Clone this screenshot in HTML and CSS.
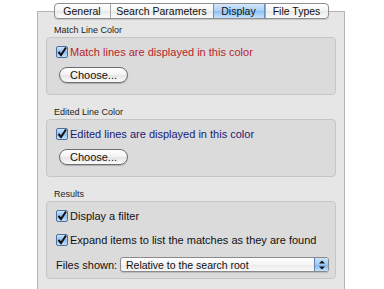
FILE: index.html
```html
<!DOCTYPE html>
<html lang="en">
<head>
    <meta charset="UTF-8">
    <title>Display Preferences</title>
    <link rel="stylesheet" href="styles.css">
</head>
<body>
    <div class="tabview">
        <div class="tabs">
            <div class="tab first">General</div>
            <div class="tab">Search Parameters</div>
            <div class="tab selected">Display</div>
            <div class="tab last">File Types</div>
        </div>

        <div class="section-title">Match Line Color</div>
        <div class="group">
            <label class="check red">
                <svg class="box" width="12" height="12" viewBox="0 0 12 12"><rect x="0.5" y="0.5" width="11" height="11" rx="1.5" fill="url(#aqua)" stroke="#4d6f9c"/><path d="M2.5 6 L5 9 L10 1.5" fill="none" stroke="#111" stroke-width="2"/></svg>
                Match lines are displayed in this color
            </label>
            <div class="button">Choose...</div>
        </div>

        <div class="section-title">Edited Line Color</div>
        <div class="group">
            <label class="check blue">
                <svg class="box" width="12" height="12" viewBox="0 0 12 12"><rect x="0.5" y="0.5" width="11" height="11" rx="1.5" fill="url(#aqua)" stroke="#4d6f9c"/><path d="M2.5 6 L5 9 L10 1.5" fill="none" stroke="#111" stroke-width="2"/></svg>
                Edited lines are displayed in this color
            </label>
            <div class="button">Choose...</div>
        </div>

        <div class="section-title">Results</div>
        <div class="group results">
            <label class="check">
                <svg class="box" width="12" height="12" viewBox="0 0 12 12"><rect x="0.5" y="0.5" width="11" height="11" rx="1.5" fill="url(#aqua)" stroke="#4d6f9c"/><path d="M2.5 6 L5 9 L10 1.5" fill="none" stroke="#111" stroke-width="2"/></svg>
                Display a filter
            </label>
            <label class="check">
                <svg class="box" width="12" height="12" viewBox="0 0 12 12"><rect x="0.5" y="0.5" width="11" height="11" rx="1.5" fill="url(#aqua)" stroke="#4d6f9c"/><path d="M2.5 6 L5 9 L10 1.5" fill="none" stroke="#111" stroke-width="2"/></svg>
                Expand items to list the matches as they are found
            </label>
            <div class="popup-row">
                <span class="popup-label">Files shown:</span>
                <div class="popup">
                    <span class="value">Relative to the search root</span>
                    <span class="stepper">
                        <svg width="8" height="10" viewBox="0 0 8 10"><path d="M4 0.5 L7 3.5 L1 3.5 Z M4 9.5 L7 6.5 L1 6.5 Z" fill="#111"/></svg>
                    </span>
                </div>
            </div>
        </div>
    </div>

    <svg width="0" height="0" style="position:absolute">
        <defs>
            <linearGradient id="aqua" x1="0" y1="0" x2="0" y2="1">
                <stop offset="0" stop-color="#d6e8fb"/>
                <stop offset="0.5" stop-color="#8fbdf0"/>
                <stop offset="1" stop-color="#c8e4ff"/>
            </linearGradient>
        </defs>
    </svg>
</body>
</html>
```

FILE: styles.css
```css
* {
    margin: 0;
    padding: 0;
    box-sizing: border-box;
}

body {
    background: #fff;
    font-family: "Liberation Sans", Arial, sans-serif;
    font-size: 11px;
    color: #111;
    padding-left: 37px;
    padding-top: 11px;
    white-space: nowrap;
}

.tabview {
    width: 308px;
    height: 290px;
    background: #e6e6e6;
    border: 1px solid #b4b4b4;
    border-bottom: none;
    padding: 0 8px 0 8px;
}

.tabs {
    display: flex;
    width: 275px;
    height: 16px;
    margin: -9px auto 0;
    border: 1px solid #8e8e8e;
    border-radius: 4px;
    background: linear-gradient(#ffffff 0%, #f4f4f4 50%, #e8e8e8 51%, #fbfbfb 100%);
    overflow: hidden;
    box-shadow: 0 1px 1px rgba(0,0,0,0.15);
}

.tab {
    display: flex;
    align-items: center;
    justify-content: center;
    font-size: 10.5px;
    height: 100%;
    border-left: 1px solid #a8a8a8;
}

.tab:nth-child(1) { width: 55px; border-left: none; }
.tab:nth-child(2) { width: 103px; }
.tab:nth-child(3) { width: 52px; }
.tab:nth-child(4) { flex: 1; }

.tab.selected {
    background: linear-gradient(#d3e7fb 0%, #a9cff6 50%, #8cc0f3 51%, #c5e3ff 100%);
    border-left-color: #6d8fb8;
    border-right: 1px solid #6d8fb8;
}

.section-title {
    font-size: 9px;
    color: #222;
    margin: 6px 0 0 8px;
    height: 11px;
    line-height: 11px;
}

.group {
    background: #dbdbdb;
    border: 1px solid #c6c6c6;
    border-radius: 4px;
    height: 58px;
    margin-top: 1px;
    margin-bottom: 12px;
    padding: 8px 0 0 9px;
}

.group + .section-title {
    margin-top: 0;
}

.check {
    display: flex;
    align-items: center;
    height: 12px;
    font-size: 11px;
}

.box {
    flex: none;
    margin-right: 2px;
}

.check.red {
    color: #b8242b;
}

.check.blue {
    color: #1a1a78;
}

.button {
    width: 69px;
    height: 16px;
    margin: 9px 0 0 3px;
    border: 1px solid #6c6c6c;
    border-radius: 8px;
    background: linear-gradient(#ffffff 0%, #f2f2f2 50%, #e4e4e4 51%, #fafafa 100%);
    box-shadow: 0 1px 1px rgba(0,0,0,0.2);
    display: flex;
    align-items: center;
    justify-content: center;
    font-size: 11px;
}

.group.results {
    height: 78px;
    padding-top: 8px;
    display: flex;
    flex-direction: column;
    gap: 12px;
}

.popup-row {
    display: flex;
    align-items: center;
    gap: 8px;
    margin-top: -1px;
}

.popup-label {
    font-size: 11px;
    width: 56px;
}

.popup {
    display: flex;
    align-items: center;
    width: 209px;
    height: 15px;
    border: 1px solid #8a8a8a;
    border-radius: 3px;
    background: linear-gradient(#ffffff 0%, #f4f4f4 50%, #e9e9e9 51%, #fafafa 100%);
    overflow: hidden;
    box-shadow: 0 1px 1px rgba(0,0,0,0.15);
}

.popup .value {
    flex: 1;
    padding-left: 5px;
    font-size: 10.5px;
}

.stepper {
    width: 14px;
    height: 100%;
    display: flex;
    align-items: center;
    justify-content: center;
    background: linear-gradient(#cfe4fa 0%, #9ccaf5 50%, #7bb6ef 51%, #bfe0ff 100%);
    border-left: 1px solid #5d82b1;
}
```
